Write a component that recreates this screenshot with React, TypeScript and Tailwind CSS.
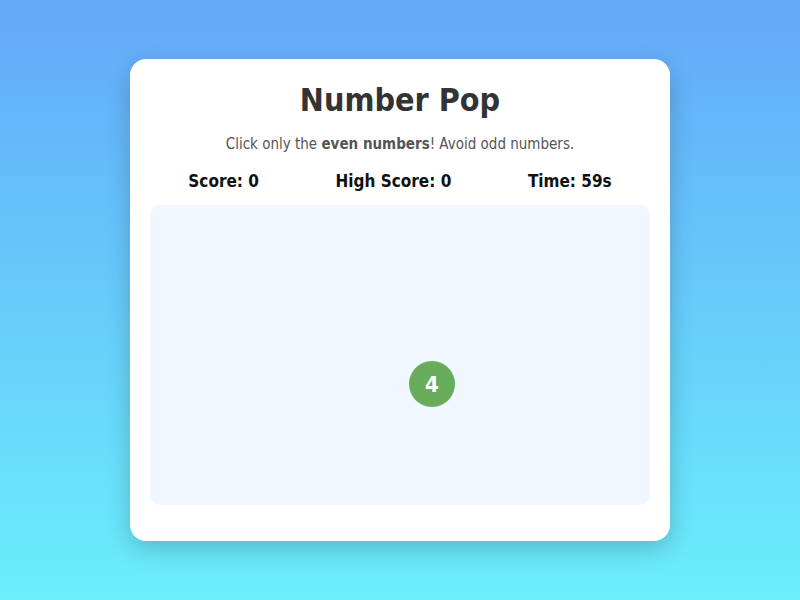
import React from "react";

export default function App() {
  return (
    <div
      className="flex h-[600px] w-full items-center justify-center bg-gradient-to-b from-[#63a8f8] to-[#6beefb]"
      style={{ fontFamily: '"DejaVu Sans Condensed", "DejaVu Sans", sans-serif' }}
    >
      <div className="w-[540px] rounded-2xl bg-white px-5 pt-5 pb-9 shadow-[0_8px_24px_rgba(0,0,0,0.2)]">
        <h1 className="text-center text-[32px] font-bold leading-[42px] text-[#333]">Number Pop</h1>
        <p className="mt-[11px] text-center text-[15px] leading-6 text-[#555]">
          Click only the <b>even numbers</b>! Avoid odd numbers.
        </p>
        <div className="mt-[13px] flex justify-around text-[17px] font-bold leading-6 text-[#111]">
          <span>Score: 0</span>
          <span>High Score: 0</span>
          <span>Time: 59s</span>
        </div>
        <div className="relative mt-3 h-[300px] rounded-[10px] bg-[#f0f7fe]">
          <button className="absolute left-[259px] top-[156px] flex h-[46px] w-[46px] items-center justify-center rounded-full bg-[#66ac5b] text-[22px] font-bold text-white">
            4
          </button>
        </div>
      </div>
    </div>
  );
}
